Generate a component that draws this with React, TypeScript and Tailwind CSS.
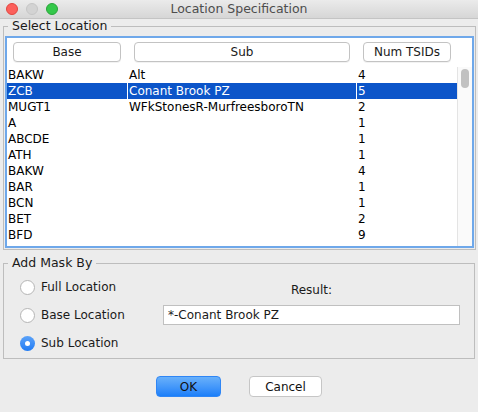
const rows = [
  { base: "BAKW", sub: "Alt", num: "4" },
  { base: "ZCB", sub: "Conant Brook PZ", num: "5", selected: true },
  { base: "MUGT1", sub: "WFkStonesR-MurfreesboroTN", num: "2" },
  { base: "A", sub: "", num: "1" },
  { base: "ABCDE", sub: "", num: "1" },
  { base: "ATH", sub: "", num: "1" },
  { base: "BAKW", sub: "", num: "4" },
  { base: "BAR", sub: "", num: "1" },
  { base: "BCN", sub: "", num: "1" },
  { base: "BET", sub: "", num: "2" },
  { base: "BFD", sub: "", num: "9" },
];

const radios = [
  { label: "Full Location", checked: false },
  { label: "Base Location", checked: false },
  { label: "Sub Location", checked: true },
];

function HeaderButton({ label, width }: { label: string; width: string }) {
  return (
    <div
      className={`${width} flex h-[20px] items-center justify-center rounded-[4px] border border-[#c3c3c3] bg-white text-[12px] text-[#1a1a1a] shadow-[0_1px_0_rgba(0,0,0,0.05)]`}
    >
      {label}
    </div>
  );
}

export default function App() {
  return (
    <div
      className="relative h-[412px] w-[478px] overflow-hidden bg-[#ececec] text-[12px] text-black"
      style={{ fontFamily: '"DejaVu Sans", sans-serif' }}
    >
      {/* title bar */}
      <div className="relative flex h-[19px] items-center justify-center border-b border-[#c4c4c4] bg-gradient-to-b from-[#ebebeb] to-[#d6d6d6]">
        <div className="absolute left-[6px] top-[3px] flex gap-[8px]">
          <span className="h-[12px] w-[12px] rounded-full border border-[#e2463f] bg-[#fc605c]" />
          <span className="h-[12px] w-[12px] rounded-full border border-[#c6c6c6] bg-[#d3d3d3]" />
          <span className="h-[12px] w-[12px] rounded-full border border-[#2aa43a] bg-[#34c84a]" />
        </div>
        <span className="text-[12.5px] text-[#4d4d4d]">Location Specification</span>
      </div>

      {/* Select Location */}
      <fieldset className="mx-[3px] border border-[#bdbdbd] px-0 pb-[1px]">
        <legend className="ml-[4px] px-[4px] text-[12.5px] leading-[14px] text-[#1a1a1a]">
          Select Location
        </legend>
        <div className="mx-[1px] mt-[3px] flex h-[212px] flex-col border-2 border-[#6fa8ea] bg-white">
          <div className="flex h-[29px] shrink-0 items-start gap-[13px] pl-[6px] pt-[4px]">
            <HeaderButton label="Base" width="w-[108px]" />
            <HeaderButton label="Sub" width="w-[216px]" />
            <HeaderButton label="Num TSIDs" width="w-[88px]" />
          </div>
          <div className="flex min-h-0 flex-1">
            <div className="w-[450px]">
              {rows.map((r, i) => (
                <div key={i} className="flex h-[16px] leading-[16px]">
                  <div
                    className={`w-[120px] pl-[1px] ${r.selected ? "bg-[#0c55c9] text-white" : ""}`}
                  >
                    {r.base}
                  </div>
                  <div
                    className={`ml-[1px] w-[228px] pl-[1px] ${r.selected ? "bg-[#0c55c9] text-white" : ""}`}
                  >
                    {r.sub}
                  </div>
                  <div
                    className={`ml-[1px] w-[100px] pl-[1px] ${r.selected ? "bg-[#0c55c9] text-white" : ""}`}
                  >
                    {r.num}
                  </div>
                </div>
              ))}
            </div>
            <div className="w-[15px] border-l border-[#e4e4e4] bg-[#fafafa] pl-[3px] pt-[2px]">
              <div className="h-[19px] w-[8px] rounded-full bg-[#c1c1c1]" />
            </div>
          </div>
        </div>
      </fieldset>

      {/* Add Mask By */}
      <fieldset className="mx-[3px] mt-[6px] border border-[#bdbdbd] px-0 pb-[1px]">
        <legend className="ml-[4px] px-[4px] text-[12.5px] leading-[14px] text-[#1a1a1a]">
          Add Mask By
        </legend>
        <div className="flex pt-[3px]">
          <div className="w-[159px] pl-[16px]">
            {radios.map((r) => (
              <div key={r.label} className="flex h-[28px] items-center gap-[6px]">
                {r.checked ? (
                  <span className="flex h-[15px] w-[15px] items-center justify-center rounded-full bg-gradient-to-b from-[#5aa2f8] to-[#1f7bf4]">
                    <span className="h-[5px] w-[5px] rounded-full bg-white" />
                  </span>
                ) : (
                  <span className="h-[15px] w-[15px] rounded-full border border-[#b5b5b5] bg-white" />
                )}
                <span className="text-[#1a1a1a]">{r.label}</span>
              </div>
            ))}
          </div>
          <div className="flex w-[297px] flex-col items-center pt-[9px]">
            <div className="h-[16px] leading-[16px] text-[#1a1a1a]">Result:</div>
            <div className="mt-[7px] flex h-[20px] w-full items-center border border-[#c0c0c0] bg-white pl-[4px] text-[#1a1a1a]">
              *-Conant Brook PZ
            </div>
          </div>
        </div>
      </fieldset>

      {/* buttons */}
      <div className="mt-[17px] flex justify-center gap-[28px]">
        <div className="flex h-[21px] w-[65px] items-center justify-center rounded-[4px] border border-[#2f86f5] bg-gradient-to-b from-[#68b0fa] to-[#1a7ff9] text-[#111]">
          OK
        </div>
        <div className="flex h-[21px] w-[73px] items-center justify-center rounded-[4px] border border-[#c6c6c6] bg-white text-[#111]">
          Cancel
        </div>
      </div>
    </div>
  );
}
